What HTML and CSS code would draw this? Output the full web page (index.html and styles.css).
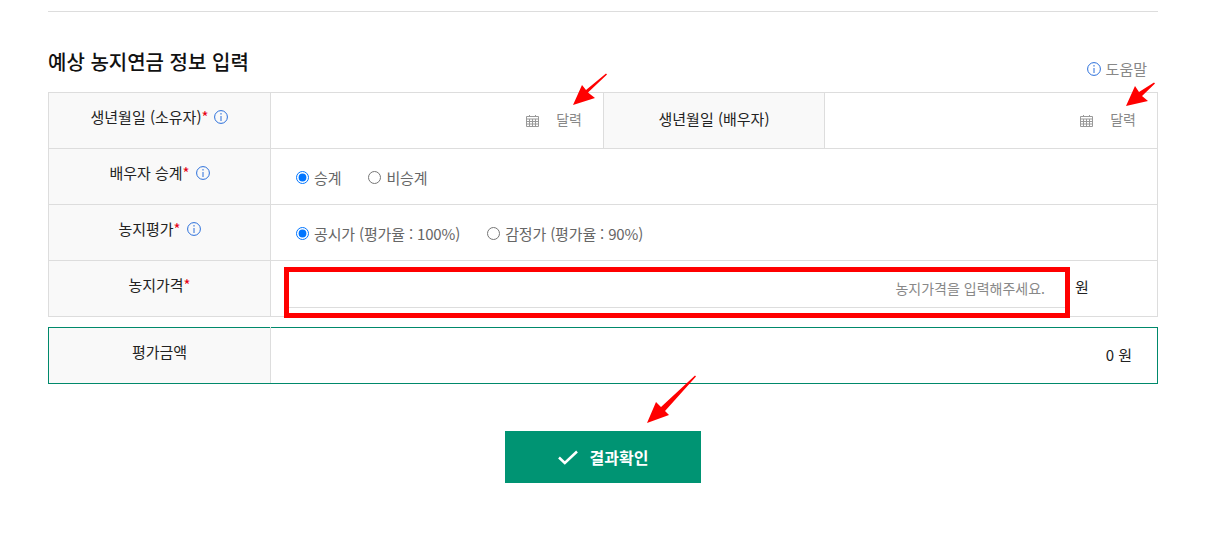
FILE: index.html

```html
<!DOCTYPE html>
<html lang="ko">
<head>
  <meta charset="UTF-8">
  <title>예상 농지연금 정보 입력</title>
  <link rel="stylesheet" href="styles.css">
</head>
<body>
<div class="page">
  <div class="title-row">
    <h2>예상 농지연금 정보 입력</h2>
    <a class="help">
      <svg class="info" viewBox="0 0 14 14"><circle cx="7" cy="7" r="6.4"/><path d="M7 3v1.6M7 6v5"/></svg>
      도움말
    </a>
  </div>

  <table class="form">
    <colgroup><col class="w1"><col class="w2"><col class="w3"><col></colgroup>
    <tr>
      <th><span class="lbl">생년월일 (소유자)<em>*</em><svg class="info" viewBox="0 0 14 14"><circle cx="7" cy="7" r="6.4"/><path d="M7 3v1.6M7 6v5"/></svg></span></th>
      <td class="date">
        <svg class="cal" viewBox="0 0 13 12"><path d="M3.500 0v2M9.500 0v2M.5 1.500h12v10H.5zM.5 4h12M.5 6.500h12M.5 9h12M3.500 4v7.500M6.500 4v7.500M9.500 4v7.500"/></svg>
        <span>달력</span>
      </td>
      <th><span class="lbl mid">생년월일 (배우자)</span></th>
      <td class="date">
        <svg class="cal" viewBox="0 0 13 12"><path d="M3.500 0v2M9.500 0v2M.5 1.500h12v10H.5zM.5 4h12M.5 6.500h12M.5 9h12M3.500 4v7.500M6.500 4v7.500M9.500 4v7.500"/></svg>
        <span>달력</span>
      </td>
    </tr>
    <tr>
      <th><span class="lbl">배우자 승계<em>*</em><svg class="info" viewBox="0 0 14 14"><circle cx="7" cy="7" r="6.4"/><path d="M7 3v1.6M7 6v5"/></svg></span></th>
      <td colspan="3" class="radios">
        <label><input type="radio" name="spouse" checked>승계</label>
        <label><input type="radio" name="spouse">비승계</label>
      </td>
    </tr>
    <tr>
      <th><span class="lbl">농지평가<em>*</em><svg class="info" viewBox="0 0 14 14"><circle cx="7" cy="7" r="6.4"/><path d="M7 3v1.6M7 6v5"/></svg></span></th>
      <td colspan="3" class="radios">
        <label><input type="radio" name="rate" checked>공시가 (평가율 : 100%)</label>
        <label><input type="radio" name="rate">감정가 (평가율 : 90%)</label>
      </td>
    </tr>
    <tr>
      <th><span class="lbl">농지가격<em>*</em></span></th>
      <td colspan="3">
        <div class="price">
          <input type="text" placeholder="농지가격을 입력해주세요.">
          <span class="unit">원</span>
        </div>
      </td>
    </tr>
  </table>

  <table class="form result">
    <colgroup><col class="w1"><col></colgroup>
    <tr>
      <th><span class="lbl">평가금액</span></th>
      <td class="total">0 원</td>
    </tr>
  </table>

  <div class="actions">
    <button type="button">
      <svg class="check" viewBox="0 0 20 15"><path d="M1 7.500l5.800 5.500L19 1.500"/></svg>
      결과확인
    </button>
  </div>

  <!-- annotations drawn over the form -->
  <div class="mark"></div>
  <svg class="arrows" viewBox="0 0 1224 542">
    <polygon points="607,74.500 588,92.500 595,98 573,105 582,85 586,90 606,73.500"/>
    <polygon points="1155,83.500 1142,96 1148,101 1126,106 1135,86 1139,92 1154,82.500"/>
    <polygon points="696,376.500 665,411 669,415 647,423 656,402 661,407 695,375.500"/>
  </svg>
</div>
</body>
</html>
```

FILE: styles.css

```css
body {
  margin: 0;
  background: #fff;
  font-family: "Noto Sans CJK KR", "Noto Sans", sans-serif;
  font-size: 15px;
  color: #222;
}
.page {
  height: 542px;
  overflow: hidden;
  padding: 11px 66px 0 48px;
}
.title-row {
  display: flex;
  justify-content: space-between;
  align-items: flex-end;
  height: 80px;
  border-top: 1px solid #ddd;
}
.title-row h2 {
  margin: 0 0 16px;
  font-size: 20px;
  line-height: 28px;
  font-weight: 500;
  color: #111;
}
.help {
  display: flex;
  align-items: center;
  gap: 5px;
  margin: 0 11px 13px 0;
  line-height: 20px;
  color: #888;
}
.info {
  width: 14px;
  height: 14px;
  fill: none;
  stroke: #2a6fdb;
  stroke-width: 1;
}
.form {
  width: 1110px;
  table-layout: fixed;
  border-collapse: collapse;
}
.w1 { width: 222px; }
.w2 { width: 333px; }
.w3 { width: 221px; }
.form th, .form td {
  height: 55px;
  padding: 0;
  border: 1px solid #ddd;
  font-weight: 400;
}
.form th {
  background: #f9f9f9;
  color: #222;
  text-align: center;
}
.lbl {
  display: inline-flex;
  align-items: center;
  position: relative;
  top: -4px;
}
.lbl.mid { top: -2px; }
.lbl em {
  font-style: normal;
  color: #e60012;
}
.lbl .info { margin-left: 6px; }
.form .date {
  padding-right: 21px;
  text-align: right;
  font-size: 14px;
  color: #888;
}
.date span { margin-left: 13px; position: relative; top: -2px; }
.cal {
  width: 13px;
  height: 12px;
  fill: none;
  stroke: #999;
  stroke-width: 1;
}
.form .radios {
  padding-left: 25px;
  color: #666;
  letter-spacing: -0.15px;
}
.radios label {
  display: inline-flex;
  align-items: center;
  margin-right: 23px;
  position: relative;
  top: 1px;
}
.radios input {
  margin: 0 5px 0 0;
  accent-color: #0075ff;
}
.price {
  display: flex;
  align-items: flex-start;
  height: 55px;
  box-sizing: border-box;
  padding: 10px 0 0 18px;
}
.price input {
  box-sizing: border-box;
  width: 777px;
  height: 37px;
  padding: 0 21px 3px 10px;
  border: 0;
  border-bottom: 1px solid #ddd;
  outline: 0;
  font: inherit;
  font-size: 14px;
  text-align: right;
}
.price input::placeholder { color: #888; opacity: 1; }
.unit {
  margin-left: 9px;
  line-height: 32px;
  color: #222;
}
.result {
  margin-top: 10px;
  border: 1px solid #00896b;
}
.result th { border-color: #00896b #ddd #00896b #00896b; }
.result td { border-color: #00896b; }
.form .total {
  height: 53px;
  padding: 0 25px 2px 0;
  text-align: right;
}
.actions {
  display: flex;
  justify-content: center;
  margin-top: 47px;
}
.actions button {
  display: flex;
  align-items: center;
  justify-content: center;
  gap: 12px;
  width: 196px;
  height: 52px;
  border: 0;
  background: #009473;
  color: #fff;
  font: inherit;
  font-size: 16px;
  font-weight: 700;
}
.check {
  width: 20px;
  height: 15px;
  fill: none;
  stroke: #fff;
  stroke-width: 2.500;
}
.mark {
  position: absolute;
  left: 284px;
  top: 267px;
  box-sizing: border-box;
  width: 786px;
  height: 51px;
  border: 5px solid #f00;
}
.arrows {
  position: absolute;
  left: 0;
  top: 0;
  width: 1224px;
  height: 542px;
  fill: #f00;
  pointer-events: none;
}
```
